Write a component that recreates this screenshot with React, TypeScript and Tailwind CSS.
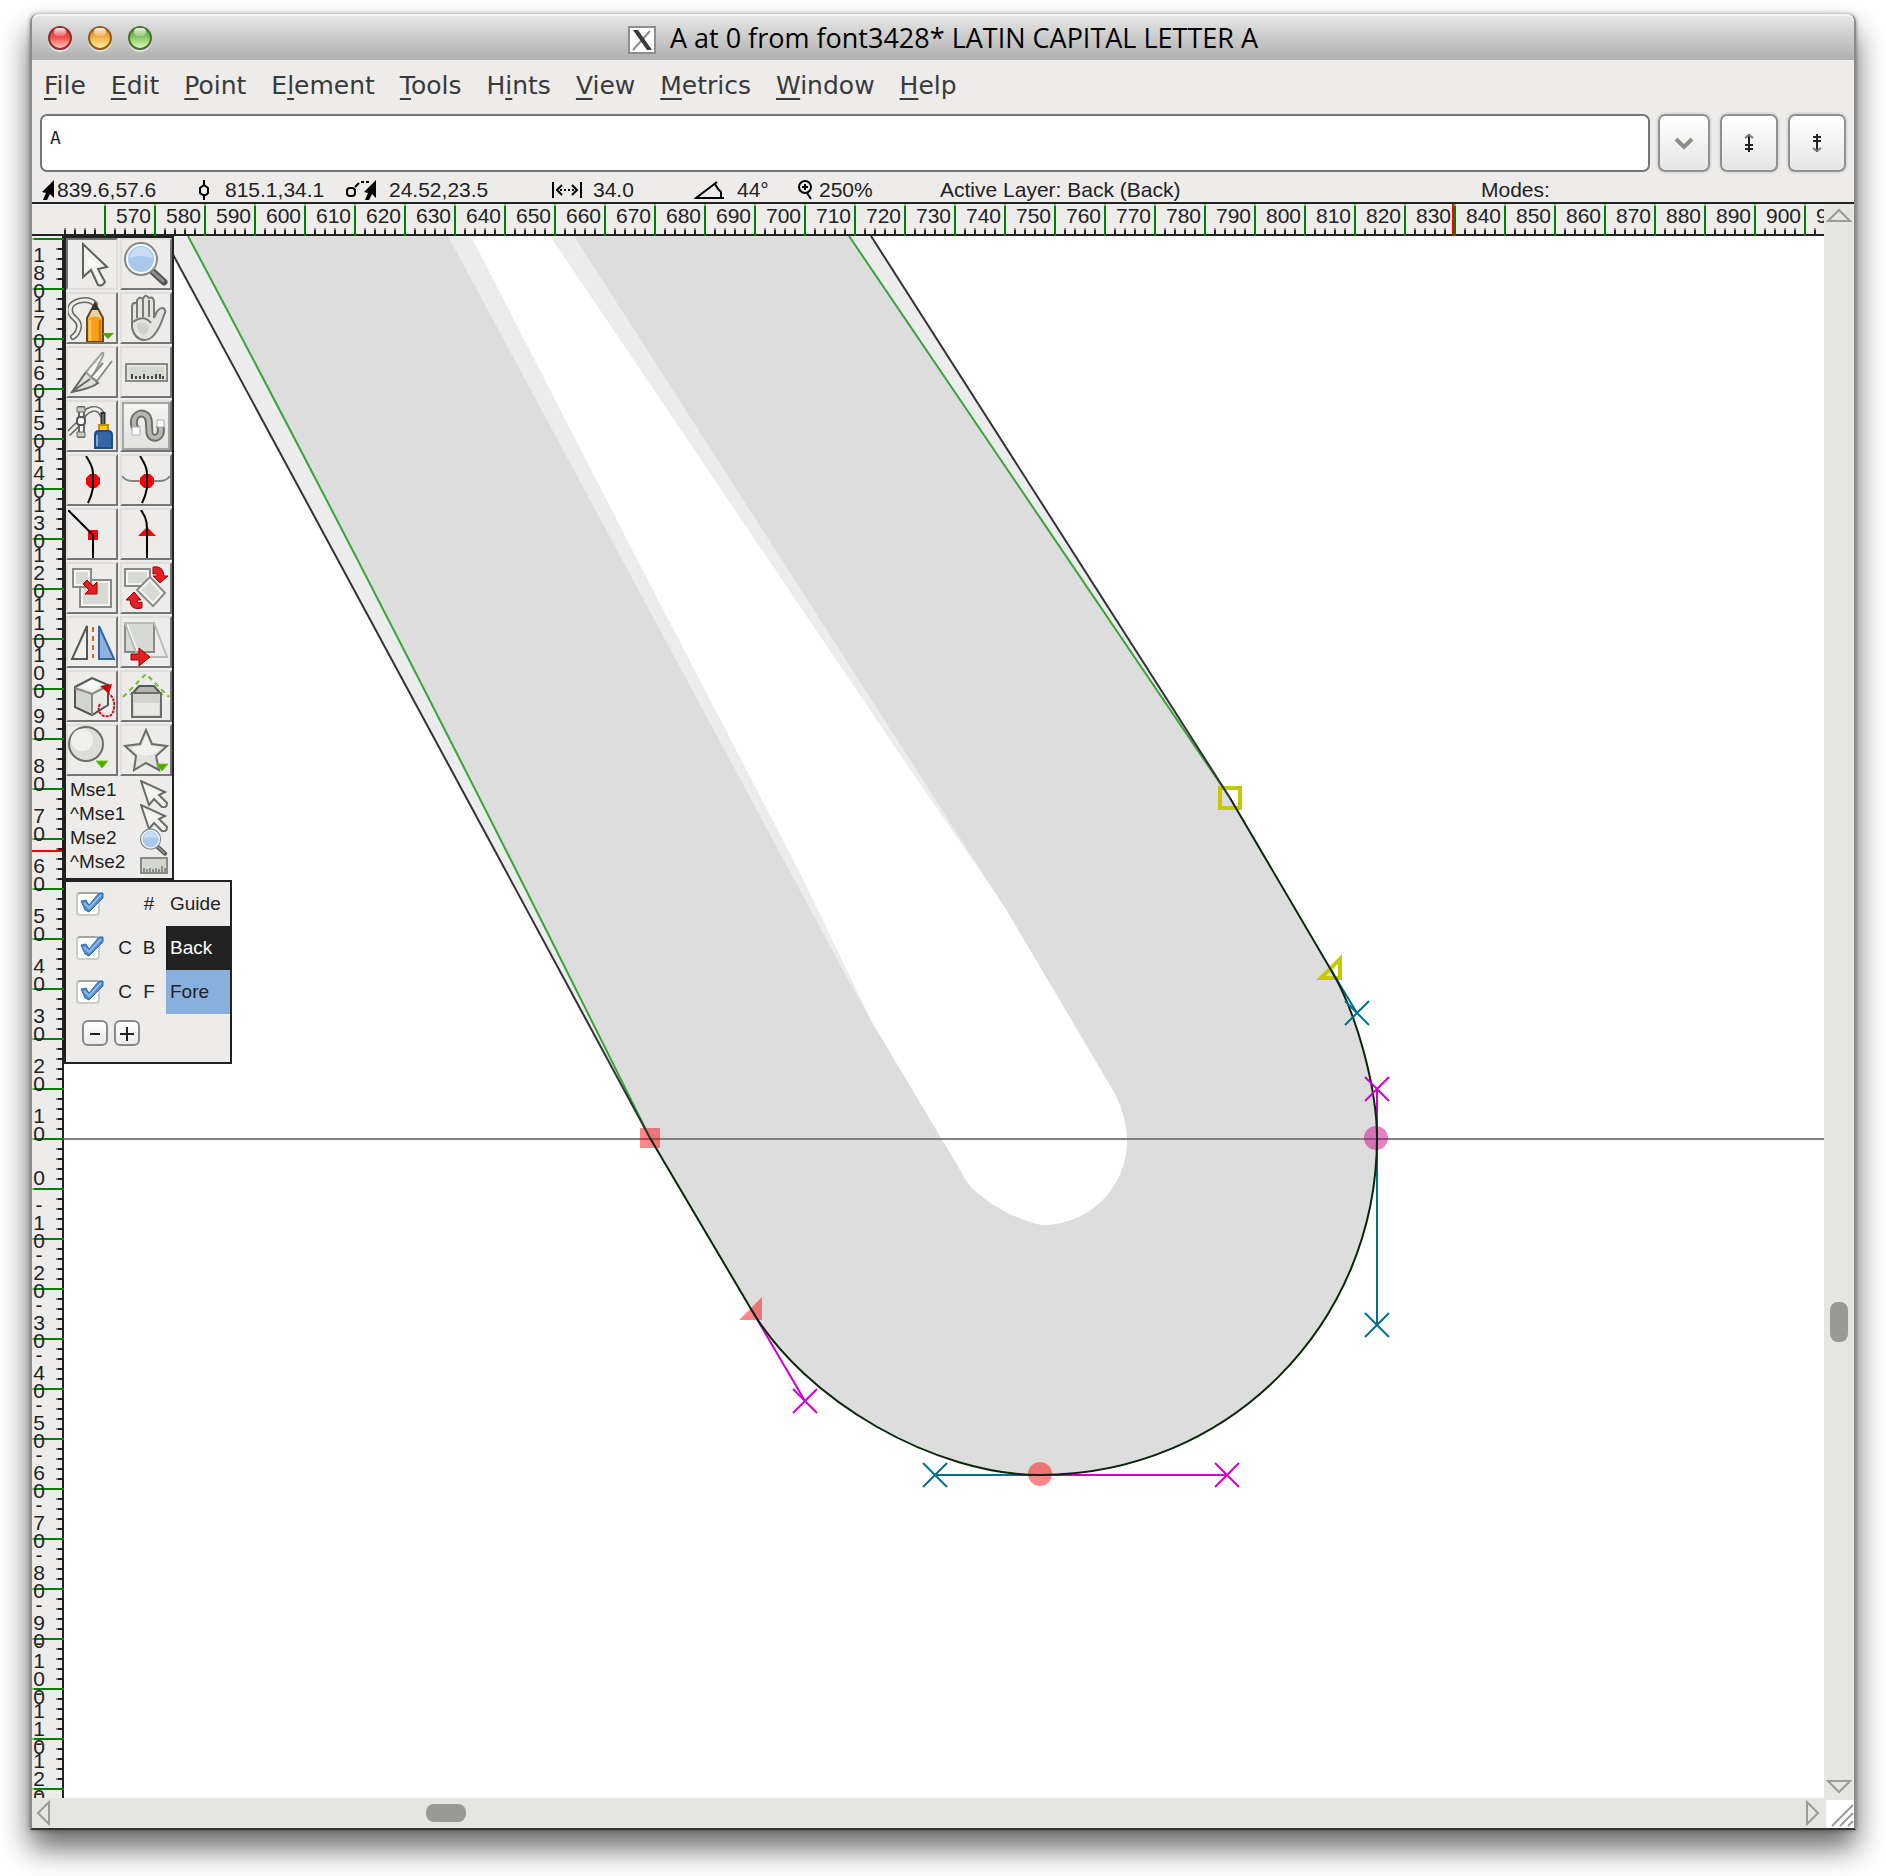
import React from "react";

const menus: [string, number][] = [
  ["File", 0],
  ["Edit", 0],
  ["Point", 0],
  ["Element", 1],
  ["Tools", 0],
  ["Hints", 1],
  ["View", 0],
  ["Metrics", 0],
  ["Window", 0],
  ["Help", 0],
];

const rulerX = Array.from({ length: 35 }, (_, i) => 570 + i * 10);
const rulerY = Array.from({ length: 32 }, (_, i) => 180 - i * 10);

const labelTop: Record<number, string> = {
  1: "mt-[31px]",
  2: "mt-[19px]",
  3: "mt-2",
  4: "-mt-1",
};

function MacButton({ label, tone }: { label: string; tone: string }) {
  return (
    <button
      aria-label={label}
      className={`relative h-6 w-6 rounded-full border-2 shadow-[0_2px_1px_rgba(255,255,255,0.6)] ${tone}`}
    >
      <span className="absolute left-1 right-1 top-0 h-2 rounded-full bg-linear-to-b from-white/90 to-white/20" />
    </button>
  );
}

function TitleBar() {
  return (
    <header className="relative flex h-[46px] shrink-0 items-center justify-center rounded-t-lg border-t-2 border-[#f4f4f4] bg-linear-to-b from-[#e6e6e6] to-[#b0b0b0]">
      <div className="absolute left-4 top-[10px] flex gap-4">
        <MacButton label="Close" tone="border-[#8f2f30] bg-linear-to-b from-[#c93438] via-[#f8504e] to-[#ffc4c0]" />
        <MacButton label="Minimize" tone="border-[#935c1e] bg-linear-to-b from-[#cf7f24] via-[#f6b347] to-[#fff19c]" />
        <MacButton label="Zoom" tone="border-[#4b7136] bg-linear-to-b from-[#569b39] via-[#8dcb69] to-[#dcf8b8]" />
      </div>
      <svg className="mr-3.5 mt-1 h-7 w-7" viewBox="0 0 28 28" aria-hidden="true">
        <rect x="1" y="1" width="26" height="26" fill="#fff" stroke="#8e8e8e" strokeWidth="2" />
        <path d="M22 5 5 24" stroke="#8c8c8c" strokeWidth="2" />
        <path d="M5 4h5l14 20h-5z" fill="#3a3a3a" />
      </svg>
      <h1 className="whitespace-nowrap font-['Open_Sans','Noto_Sans',sans-serif] text-[27px] leading-8 text-black">
        A at 0 from font3428* LATIN CAPITAL LETTER A
      </h1>
    </header>
  );
}

function MenuBar() {
  return (
    <nav className="flex h-[52px] shrink-0 items-center gap-[25px] pl-3 font-['DejaVu_Sans',sans-serif] text-[25px] text-[#3a3a3a]">
      {menus.map(([name, at]) => (
        <button key={name} className="leading-8">
          {name.slice(0, at)}
          <span className="underline decoration-2 underline-offset-4">{name[at]}</span>
          {name.slice(at + 1)}
        </button>
      ))}
    </nav>
  );
}

const toolButton =
  "flex h-[58px] items-center justify-center rounded-[7px] border-2 border-[#8f8f8f] bg-linear-to-b from-white to-[#e6e6e6] shadow-[0_0_0_2px_#e0dfdd]";

function WordBar() {
  return (
    <div className="flex h-[62px] shrink-0 items-center gap-2 px-2">
      <input
        aria-label="Word list"
        defaultValue="A"
        className="h-[58px] min-w-0 flex-1 rounded-[7px] border-2 border-[#757575] bg-white pb-3 pl-2 font-['DejaVu_Sans_Mono',monospace] text-lg text-[#222] outline-none"
      />
      <button aria-label="Show word list" className={`w-[52px] ${toolButton}`}>
        <svg className="h-4 w-5" viewBox="0 0 20 16" fill="none" aria-hidden="true">
          <path d="M2 4l8 8 8-8" stroke="#8c8e88" strokeWidth="4" />
        </svg>
      </button>
      <button aria-label="Previous in word list" className={`ml-0.5 w-[58px] ${toolButton}`}>
        <svg className="h-5 w-3" viewBox="0 0 12 20" fill="none" stroke="#222" strokeWidth="2" aria-hidden="true">
          <path d="M6 1v18M2 12h8M2 16h8" />
          <path d="M2 5 6 2l4 3" stroke="#777" />
        </svg>
      </button>
      <button aria-label="Next in word list" className={`ml-0.5 w-[58px] ${toolButton}`}>
        <svg className="h-5 w-3" viewBox="0 0 12 20" fill="none" stroke="#222" strokeWidth="2" aria-hidden="true">
          <path d="M6 1v18M2 4h8M2 8h8" />
          <path d="M2 15l4 3 4-3" stroke="#777" />
        </svg>
      </button>
    </div>
  );
}

function Field({ width, slot, icon, children }: { width: string; slot: string; icon?: React.ReactNode; children: string }) {
  return (
    <div className={`flex shrink-0 items-center ${width}`}>
      {icon && <span className={`h-5 shrink-0 ${slot}`}>{icon}</span>}
      <span>{children}</span>
    </div>
  );
}

const arrowPath = "M12 0V18L8 14 5 20H1L4 13 0 12Z";

function StatusBar() {
  return (
    <div className="flex h-7 shrink-0 items-center overflow-hidden whitespace-nowrap pl-2.5 pt-1 font-['Liberation_Sans',Arial,sans-serif] text-[21px] leading-5 text-[#222]">
      <Field
        width="w-[156px]"
        slot="w-[15px]"
        icon={
          <svg width="12" height="20" viewBox="0 0 12 20" aria-hidden="true">
            <path d={arrowPath} fill="#000" />
          </svg>
        }
      >
        839.6,57.6
      </Field>
      <Field
        width="w-[148px]"
        slot="w-[27px]"
        icon={
          <svg width="12" height="20" viewBox="0 0 12 20" fill="none" stroke="#000" strokeWidth="2" aria-hidden="true">
            <path d="M6 0v6M6 15v5M6 5 2 8v5l3 2h3l2-2V8Z" />
          </svg>
        }
      >
        815.1,34.1
      </Field>
      <Field
        width="w-[206px]"
        slot="w-[43px]"
        icon={
          <svg width="31" height="20" viewBox="0 0 31 20" aria-hidden="true">
            <rect x="1" y="8" width="8" height="8" rx="3" fill="none" stroke="#000" strokeWidth="2" />
            <path d="M9 7l4-4M15 2h3M20 2h3" stroke="#000" strokeWidth="2" />
            <path d={arrowPath} transform="translate(18 0)" fill="#000" />
          </svg>
        }
      >
        24.52,23.5
      </Field>
      <Field
        width="w-[142px]"
        slot="w-[41px]"
        icon={
          <svg width="30" height="20" viewBox="0 0 30 20" fill="none" stroke="#000" strokeWidth="2" aria-hidden="true">
            <path d="M1 2v16M29 2v16M10 5l-5 5 5 5M20 5l5 5-5 5" />
            <path d="M8 10h14" strokeDasharray="2 2" />
          </svg>
        }
      >
        34.0
      </Field>
      <Field
        width="w-[103px]"
        slot="w-[43px]"
        icon={
          <svg width="30" height="20" viewBox="0 0 30 20" fill="none" stroke="#000" strokeWidth="2" aria-hidden="true">
            <path d="M23 2 2 18h28M21 4l3 5 3 3v6" />
          </svg>
        }
      >
        44°
      </Field>
      <Field
        width="w-[143px]"
        slot="w-[22px]"
        icon={
          <svg width="18" height="20" viewBox="0 0 18 20" fill="none" stroke="#000" strokeWidth="2" aria-hidden="true">
            <circle cx="8" cy="7" r="6" />
            <path d="M8 4v6M5 7h6M10 13l4 6" />
          </svg>
        }
      >
        250%
      </Field>
      <Field width="w-[541px]" slot="">
        Active Layer: Back (Back)
      </Field>
      <Field width="w-auto" slot="">
        Modes:
      </Field>
    </div>
  );
}

function TickRow() {
  return (
    <div className="flex h-1.5 w-10 justify-between pr-2">
      {[0, 1, 2, 3].map((n) => (
        <span key={n} className="h-full w-0.5 bg-[linear-gradient(#858585_2px,#222_2px)]" />
      ))}
    </div>
  );
}

function HorizontalRuler() {
  return (
    <div className="relative flex h-8 overflow-hidden bg-[linear-gradient(#edecea_30px,#222_30px)]">
      <div className="flex h-[30px] w-[72px] shrink-0 items-end pl-8">
        <TickRow />
      </div>
      {rulerX.map((v) => (
        <div key={v} className="relative flex h-8 w-[50px] shrink-0">
          <span className="h-full w-0.5 bg-[linear-gradient(#80bf80_2px,#008000_2px)]" />
          <div className="relative h-[30px] w-12">
            <span className="block pl-2.5 pt-0.5 text-[21px] leading-5">{v}</span>
            <div className="absolute bottom-0 left-2">
              <TickRow />
            </div>
          </div>
        </div>
      ))}
      <span className="absolute left-[1420px] top-0 h-8 w-0.5 bg-[#f00]" />
    </div>
  );
}

function VerticalRuler() {
  return (
    <div className="relative w-8 shrink-0 overflow-hidden bg-[linear-gradient(to_right,#edecea_30px,#222_30px)]">
      <div className="absolute inset-0 pt-0.5">
        {rulerY.map((v) => (
          <div key={v} className="relative flex h-[50px] items-start">
            <span className="absolute left-0 top-0 h-0.5 w-full bg-[linear-gradient(to_right,#80bf80_2px,#008000_2px)]" />
            <div className="absolute right-0.5 top-[10px] flex flex-col gap-2">
              {[0, 1, 2, 3].map((n) => (
                <span key={n} className="h-0.5 w-1.5 bg-[linear-gradient(to_right,#858585_2px,#222_2px)]" />
              ))}
            </div>
            <div className={`relative z-10 flex w-[14px] flex-col items-center ${labelTop[String(v).length]}`}>
              {String(v)
                .split("")
                .map((c, i) => (
                  <span key={i} className="text-[21px] leading-[18px]">
                    {c}
                  </span>
                ))}
            </div>
          </div>
        ))}
      </div>
      <span className="absolute left-0 top-[614px] h-0.5 w-[30px] bg-[#f00]" />
    </div>
  );
}

function Cross({ x, y, color }: { x: number; y: number; color: string }) {
  return <path d={`M${x - 12} ${y - 12}l24 24M${x + 12} ${y - 12}l-24 24`} stroke={color} strokeWidth="2" />;
}

const strokeTail = "L751 1309C805 1401 935 1475 1040 1475C1227 1475 1377 1325 1377 1138C1377 1089 1357 1013 1331 970L1230 798";
const innerBowl = "L962 1173Q966 1182 972 1188C992 1207 1018 1220 1042 1225C1090 1225 1127 1187 1127 1140Q1126 1115 1115 1094L1007 911";

function GlyphDrawing() {
  const blue = "#007090";
  const pink = "#d000d0";
  return (
    <svg
      className="absolute inset-0 h-full w-full"
      viewBox="64 236 1760 1562"
      preserveAspectRatio="xMinYMin slice"
      fill="none"
      role="img"
      aria-label="Outline of the letter A"
    >
      <path d={`M163 236 650 1138${strokeTail}L871 236Z`} fill="#ececec" />
      <path d={`M188 236Q411 656 650 1138${strokeTail}L849 236Z`} fill="#ddd" />
      <path d={`M448 236 852 987 872 1022${innerBowl}L574 236Z`} fill="#ececec" />
      <path d={`M471 236 640 565 800 873 872 1022${innerBowl}L991 887 901 756 550 236Z`} fill="#fff" />
      <path d="M64 1139H1824" stroke="#808080" strokeWidth="2" />

      <rect x="640" y="1128" width="20" height="20" fill="#f00" fillOpacity=".47" />
      <path d="M739 1320 762 1297V1320Z" fill="#f00" fillOpacity=".47" />
      <circle cx="1040" cy="1474" r="12" fill="#f00" fillOpacity=".47" />
      <circle cx="1376" cy="1138" r="12" fill="#c40084" fillOpacity=".48" />
      <rect x="1220" y="788" width="20" height="20" stroke="#c8c800" strokeWidth="4" />
      <path d="M1321 978 1340 959V978Z" stroke="#c8c800" strokeWidth="4" />

      <path d="M935 1475H1040M1377 1138V1325M1331 970 1357 1013" stroke={blue} strokeWidth="2" />
      <path d="M1040 1475H1227M1377 1138V1089M751 1309 805 1401" stroke={pink} strokeWidth="2" />

      <path d="M188 236Q411 656 650 1138" stroke="#3aa33a" strokeWidth="2" />
      <path d="M849 236 1230 798" stroke="#3aa33a" strokeWidth="2" />
      <path d="M163 236 650 1138M1230 798 871 236" stroke="#333" strokeWidth="2" />
      <path d={`M650 1138${strokeTail}`} stroke="#0c240c" strokeWidth="2" />

      <Cross x={935} y={1475} color={blue} />
      <Cross x={1377} y={1325} color={blue} />
      <Cross x={1357} y={1013} color={blue} />
      <Cross x={1227} y={1475} color={pink} />
      <Cross x={1377} y={1089} color={pink} />
      <Cross x={805} y={1401} color={pink} />
    </svg>
  );
}

const g = "#555753";

const PointerIcon = (
  <>
    <path d="M17 6V39L25 32 32 47Q36 49 39 44L32 31 41 29Z" fill="#f2f2f1" stroke="#5f615d" strokeWidth="2" />
    <path d="M22 20v12l5-5 6 0z" fill="#fff" />
  </>
);
const MagnifierIcon = (
  <>
    <path d="M31 32 44 44" stroke="#555" strokeWidth="7" strokeLinecap="round" />
    <path d="M33 34 43 43" stroke="#8f918c" strokeWidth="3" strokeLinecap="round" />
    <circle cx="21" cy="21" r="16" fill="#a9c8ec" stroke="#858783" strokeWidth="2" />
    <circle cx="21" cy="21" r="14" stroke="#f3f6fa" strokeWidth="2" />
    <path d="M10 20a11 11 0 0 1 22 0q-11-4-22 0z" fill="#c8dcf3" />
  </>
);
const RulerIcon = (
  <>
    <rect x="6" y="18" width="41" height="17" fill="#d3d7cf" stroke="#888a85" strokeWidth="2" />
    <rect x="8" y="20" width="37" height="13" stroke="#f4f4f2" strokeWidth="1" />
    <path d="M12 33v-5M16 33v-3M20 33v-3M24 33v-5M28 33v-3M32 33v-3M36 33v-5M40 33v-5M43 33v-3" stroke="#444" strokeWidth="2" />
  </>
);
const SmallPointerIcon = (
  <path d="M1 1 9 25 14 19 22 27Q27 28 27 23L19 15 25 12Z" fill="#f2f2f1" stroke="#6b6d68" strokeWidth="2" />
);
const SmallRulerIcon = (
  <>
    <rect x="1" y="6" width="26" height="15" fill="#d3d7cf" stroke="#888a85" strokeWidth="2" />
    <path d="M4 20v-4M7 20v-3M10 20v-4M13 20v-3M16 20v-4M19 20v-3M22 20v-6M25 20v-4" stroke="#444" strokeWidth="1" />
  </>
);

const tools: { name: string; art: React.ReactNode; raised?: boolean }[] = [
  { name: "Pointer", art: PointerIcon },
  { name: "Magnify", art: MagnifierIcon },
  {
    name: "Draw freehand",
    art: (
      <>
        <path d="M29 12C22 5 4 8 4 18 4 27 14 26 13 35 12 41 10 43 7 45" stroke="#666863" strokeWidth="6" strokeLinecap="round" />
        <path d="M29 12C22 5 4 8 4 18 4 27 14 26 13 35 12 41 10 43 7 45" stroke="#ededeb" strokeWidth="3" strokeLinecap="round" />
        <path d="M21 50V26L29 11 37 26V50Z" fill="#f8a014" stroke="#6b4a12" strokeWidth="2" />
        <path d="M22 27 29 13 36 27Q29 22 22 27Z" fill="#eccfa6" />
        <path d="M25 18 29 10 33 18Z" fill="#333" />
        <path d="M24 28V49" stroke="#fcc15a" strokeWidth="3" />
        <path d="M34 28V49" stroke="#d87c00" strokeWidth="3" />
        <path d="M36 41H48L42 47Z" fill="#4fa60c" />
      </>
    ),
  },
  {
    name: "Scroll by hand",
    art: (
      <>
        <path
          d="M12 33V14Q13 9 17 12V8Q20 4 23 7 25 1 29 6 34 4 34 11V26Q38 15 43 16 47 18 44 23 40 36 34 43 30 48 24 48 14 47 12 35Z"
          fill="#e3e4e1"
          stroke="#777974"
          strokeWidth="2"
        />
        <path d="M17 12V26M23 8V25M29 8V25M13 30Q24 22 31 31" stroke="#777974" strokeWidth="2" />
        <path d="M17 32Q24 28 29 35 28 43 23 43 17 40 17 32Z" fill="#cfd2cc" />
      </>
    ),
  },
  {
    name: "Cut splines",
    art: (
      <>
        <path d="M6 46 20 26 32 37Q26 42 6 46Z" fill="#dfe1dd" stroke="#666863" strokeWidth="2" />
        <path d="M20 26 36 7Q38 6 37 10L26 32Z" fill="#f6f6f5" stroke="#a0a29e" strokeWidth="2" />
        <path d="M46 15 31 35 25 31 37 17" fill="#f6f6f5" stroke="#888a85" strokeWidth="2" />
        <path d="M7 45 24 33" stroke="#666863" strokeWidth="2" />
      </>
    ),
  },
  { name: "Measure", art: RulerIcon },
  {
    name: "Pen",
    art: (
      <>
        <path d="M2 34 14 22C19 8 32 4 37 16" stroke="#666863" strokeWidth="6" />
        <path d="M2 34 14 22C19 8 32 4 37 16" stroke="#efefed" strokeWidth="3" />
        <path d="M13 7h5v30h-5z" fill="#f3f3f2" stroke="#666863" strokeWidth="2" />
        <path d="M11 7h8v5h-8zM11 32h8v5h-8z" fill="#c9cbc6" stroke="#666863" strokeWidth="1" />
        <rect x="11" y="17" width="8" height="8" rx="3" fill="#fff" stroke="#555" strokeWidth="2" />
        <path d="M37 12V25" stroke="#2e3436" strokeWidth="5" />
        <path d="M37 14V24" stroke="#9b9d99" strokeWidth="1" />
        <rect x="33" y="25" width="9" height="6" fill="#f5d10a" stroke="#b89200" strokeWidth="2" />
        <path d="M29 48V35Q29 31 33 31H42Q46 31 46 35V48Z" fill="#3465a4" stroke="#204a87" strokeWidth="2" />
        <path d="M31 46V35" stroke="#86a8d6" strokeWidth="2" />
      </>
    ),
  },
  {
    name: "Spiro",
    raised: true,
    art: (
      <>
        <path d="M16 30C10 18 18 12 24 14 33 17 26 34 32 37 38 40 43 34 40 25" stroke="#6d6f6a" strokeWidth="8" />
        <path d="M16 30C10 18 18 12 24 14 33 17 26 34 32 37 38 40 43 34 40 25" stroke="#b5b8b2" strokeWidth="4" />
        <rect x="12" y="27" width="8" height="8" fill="#fff" stroke="#aaa" strokeWidth="1" />
        <rect x="37" y="20" width="7" height="7" fill="#fff" stroke="#aaa" strokeWidth="1" />
      </>
    ),
  },
  {
    name: "Add curve point",
    art: (
      <>
        <path d="M24 20h6l4 4v6l-4 4h-6l-4-4v-6z" fill="#f00" />
        <path d="M20 2 23 7Q27 14 27 20V34L25 42 22 49" stroke="#000" strokeWidth="2" />
      </>
    ),
  },
  {
    name: "Add HV curve point",
    art: (
      <>
        <path d="M2 22Q6 27 12 27H40Q46 27 50 22" stroke="#858585" strokeWidth="2" />
        <path d="M24 20h6l4 4v6l-4 4h-6l-4-4v-6z" fill="#f00" />
        <path d="M20 2 23 7Q27 14 27 20V34L25 42 22 49" stroke="#000" strokeWidth="2" />
      </>
    ),
  },
  {
    name: "Add corner point",
    art: (
      <>
        <rect x="22" y="22" width="10" height="10" fill="#f00" />
        <path d="M2 2 27 27V50" stroke="#000" strokeWidth="2" />
      </>
    ),
  },
  {
    name: "Add tangent point",
    art: (
      <>
        <path d="M27 19 36 28H18Z" fill="#f00" />
        <path d="M21 2 25 9Q27 14 27 20V50" stroke="#000" strokeWidth="2" />
      </>
    ),
  },
  {
    name: "Scale",
    art: (
      <>
        <rect x="14" y="18" width="31" height="27" fill="#d7dad3" stroke="#888a85" strokeWidth="2" />
        <rect x="16" y="20" width="27" height="23" stroke="#f4f4f2" strokeWidth="2" />
        <rect x="7" y="7" width="18" height="18" fill="#d7dad3" stroke="#888a85" strokeWidth="2" />
        <rect x="9" y="9" width="14" height="14" stroke="#f4f4f2" strokeWidth="2" />
        <path d="M17 22 21 18 27 24 31 20V32H19L23 28Z" fill="#e02024" stroke="#a40000" strokeWidth="1" />
      </>
    ),
  },
  {
    name: "Rotate",
    art: (
      <>
        <rect x="5" y="7" width="25" height="17" fill="#d7dad3" stroke="#888a85" strokeWidth="2" />
        <rect x="7" y="9" width="21" height="13" stroke="#f4f4f2" strokeWidth="2" />
        <path d="M30 15 45 31 33 44 17 28Z" fill="#d7dad3" stroke="#888a85" strokeWidth="2" />
        <path d="M30 18 42 31 33 41 20 28Z" stroke="#f4f4f2" strokeWidth="2" />
        <path d="M33 5Q43 3 44 14H48L40 21 33 14H37Q38 11 33 12Z" fill="#e02024" stroke="#a40000" strokeWidth="1" />
        <path d="M22 46Q10 49 10 38H6L14 30 21 38H17Q17 42 22 40Z" fill="#e02024" stroke="#a40000" strokeWidth="1" />
      </>
    ),
  },
  {
    name: "Flip",
    art: (
      <>
        <path d="M21 10V43H6Z" fill="#f0f0ee" stroke={g} strokeWidth="2" />
        <path d="M27 11V42" stroke="#d9660a" strokeWidth="2" strokeDasharray="5 4" />
        <path d="M33 10V43H48Z" fill="#8fb3de" stroke="#3465a4" strokeWidth="2" />
      </>
    ),
  },
  {
    name: "Skew",
    art: (
      <>
        <rect x="5" y="7" width="29" height="29" fill="#d7dad3" stroke="#888a85" strokeWidth="2" />
        <path d="M7 9 17 35" stroke="#fff" strokeWidth="2" />
        <path d="M5 7H34L47 41H18Z" stroke="#b9bbb6" strokeWidth="2" />
        <path d="M11 38H19V32L30 41 19 50V44H11Z" fill="#e02024" stroke="#a40000" strokeWidth="1" />
      </>
    ),
  },
  {
    name: "Rotate in 3D",
    art: (
      <>
        <path d="M9 17 26 8 42 15V35L26 45 9 37Z" fill="#e9e9e7" stroke={g} strokeWidth="2" />
        <path d="M10 19 26 25V43L10 36Z" fill="#d2d4d0" />
        <path d="M9 18 26 24 42 16M26 24V45" stroke="#888a85" strokeWidth="2" />
        <path d="M26 10 38 15 26 20 14 17Z" fill="#f8f8f8" />
        <path d="M34 34Q30 42 38 46 47 48 48 38 49 28 43 24" stroke="#c81418" strokeWidth="2" strokeDasharray="3 1" />
        <path d="M34 16 46 14 43 24Z" fill="#cc0000" />
      </>
    ),
  },
  {
    name: "Perspective",
    art: (
      <>
        <path d="M3 27 26 4 49 27" stroke="#73c02c" strokeWidth="2" strokeDasharray="5 4" />
        <path d="M12 24 19 16H34L41 24Z" fill="#b4b6b1" stroke={g} strokeWidth="2" />
        <rect x="12" y="23" width="29" height="24" fill="#d3d4d0" stroke="#6b6d68" strokeWidth="2" />
        <rect x="14" y="33" width="25" height="12" fill="#e8e8e6" />
      </>
    ),
  },
  {
    name: "Ellipse",
    art: (
      <>
        <circle cx="20" cy="20" r="17" fill="#dddedb" stroke="#6b6d68" strokeWidth="2" />
        <circle cx="16" cy="16" r="11" fill="#f0f0ef" />
        <path d="M30 37H42L36 44Z" fill="#4fa60c" stroke="#73d216" strokeWidth="1" />
      </>
    ),
  },
  {
    name: "Star",
    art: (
      <>
        <path d="M26 6 32 20 47 22 36 32 39 46 26 39 14 46 16 32 5 22 20 20Z" fill="#e2e3e0" stroke="#6b6d68" strokeWidth="2" />
        <path d="M26 11 31 22 41 24 34 30 26 32 18 30 11 24 22 22Z" fill="#f1f1f0" />
        <path d="M36 40H48L42 47Z" fill="#4fa60c" stroke="#73d216" strokeWidth="1" />
      </>
    ),
  },
];

const mouseBindings: { label: string; art: React.ReactNode; box: string }[] = [
  { label: "Mse1", art: SmallPointerIcon, box: "0 0 28 28" },
  { label: "^Mse1", art: SmallPointerIcon, box: "0 0 28 28" },
  { label: "Mse2", art: MagnifierIcon, box: "4 3 45 45" },
  { label: "^Mse2", art: SmallRulerIcon, box: "0 0 28 28" },
];

function ToolPalette() {
  return (
    <section aria-label="Tools" className="absolute left-0 top-0 w-[110px] border-2 border-[#222] bg-[#edecea] pb-1">
      <div className="grid grid-cols-2 gap-0.5 pb-0.5">
        {tools.map((tool, i) => (
          <button
            key={tool.name}
            aria-label={tool.name}
            className={
              i === 0
                ? "h-[52px] border-2 border-b-[#dfdedc] border-l-[#757575] border-r-[#dfdedc] border-t-[#757575]"
                : "h-[52px] border-2 border-b-[#757575] border-l-[#dfdedc] border-r-[#757575] border-t-[#dfdedc]"
            }
          >
            <span className={tool.raised ? "block h-full border-2 border-[#a5a5a3] bg-linear-to-b from-[#f4f4f3] to-[#e2e2e0]" : "block h-full"}>
              <svg
                className={tool.raised ? "h-11 w-11" : "h-12 w-12"}
                viewBox={tool.raised ? "4 4 44 44" : "2 2 48 48"}
                fill="none"
                aria-hidden="true"
              >
                {tool.art}
              </svg>
            </span>
          </button>
        ))}
      </div>
      <ul>
        {mouseBindings.map((b) => (
          <li key={b.label} className="flex h-6 items-center justify-between pl-1 pr-1 text-[19px] leading-6">
            <span>{b.label}</span>
            <svg className="mt-2 h-7 w-7 shrink-0" viewBox={b.box} fill="none" aria-hidden="true">
              {b.art}
            </svg>
          </li>
        ))}
      </ul>
    </section>
  );
}

const layers = [
  { name: "Guide", curve: "", kind: "#", tone: "" },
  { name: "Back", curve: "C", kind: "B", tone: "bg-[#222] text-white" },
  { name: "Fore", curve: "C", kind: "F", tone: "bg-[#87b0dd]" },
];

const smallButton =
  "flex h-[26px] w-[26px] items-center justify-center rounded-md border-2 border-[#8a8a8a] bg-linear-to-b from-white to-[#ececec]";

function LayerPalette() {
  return (
    <section
      aria-label="Layers"
      className="absolute left-0 top-[644px] h-[184px] w-[168px] border-2 border-[#222] bg-[#edecea] text-[19px]"
    >
      {layers.map((layer) => (
        <label key={layer.name} className="flex h-11 items-center pl-2.5">
          <span className="relative h-6 w-6">
            <input
              type="checkbox"
              defaultChecked
              className="peer block h-6 w-6 appearance-none rounded-sm border-2 border-[#cbcec4] border-t-[#a3a898] bg-white"
            />
            <svg className="absolute left-1 top-0 hidden h-6 w-6 peer-checked:block" viewBox="0 0 24 24" aria-hidden="true">
              <path d="M1 9 6 8 9 13 19 1 23 1 23 6 12 17 9 20 5 18Z" fill="#4f8bcb" stroke="#2f6cb0" strokeWidth="1" />
              <path d="M4 11 9 16 21 3" stroke="#8fb8e4" strokeWidth="2" fill="none" />
            </svg>
          </span>
          <span className="ml-[18px] w-[14px] text-center">{layer.curve}</span>
          <span className="ml-2.5 w-[14px] text-center">{layer.kind}</span>
          <span className={`ml-auto flex h-11 w-16 items-center pl-1 ${layer.tone}`}>{layer.name}</span>
        </label>
      ))}
      <div className="flex gap-1.5 pl-4 pt-1.5">
        <button aria-label="Remove layer" className={smallButton}>
          <svg className="h-4 w-4" viewBox="0 0 16 16" stroke="#222" strokeWidth="2" aria-hidden="true">
            <path d="M3 9H13" />
          </svg>
        </button>
        <button aria-label="Add layer" className={smallButton}>
          <svg className="h-4 w-4" viewBox="0 0 16 16" stroke="#222" strokeWidth="2" aria-hidden="true">
            <path d="M1 9H15M8 2V16" />
          </svg>
        </button>
      </div>
    </section>
  );
}

function ScrollArrow({ d, label, size, box }: { d: string; label: string; size: string; box: string }) {
  return (
    <button aria-label={label} className="shrink-0">
      <svg className={size} viewBox={box} fill="none" stroke="#9b9c98" strokeWidth="2" aria-hidden="true">
        <path d={d} />
      </svg>
    </button>
  );
}

function VerticalScrollbar() {
  return (
    <div className="flex w-[30px] shrink-0 flex-col items-center bg-[#e5e6e2] pt-1">
      <ScrollArrow label="Scroll up" size="block h-3.5 w-[26px]" box="0 0 26 14" d="M2 13 13 2 24 13Z" />
      <div className="flex w-full flex-1 flex-col items-center">
        <div className="grow-[1080]" />
        <div className="h-10 w-[18px] rounded-lg bg-[#999a96]" />
        <div className="grow-[438]" />
      </div>
      <ScrollArrow label="Scroll down" size="mb-1 block h-3.5 w-[26px]" box="0 0 26 14" d="M2 1H24L13 12Z" />
    </div>
  );
}

function HorizontalScrollbar() {
  return (
    <div className="flex h-[30px] shrink-0 bg-[#e5e6e2]">
      <div className="flex flex-1 items-center pl-1">
        <ScrollArrow label="Scroll left" size="block h-[26px] w-3.5" box="0 0 14 26" d="M13 2V24L2 13Z" />
        <div className="flex flex-1 items-center">
          <div className="grow-[376]" />
          <div className="h-[18px] w-10 rounded-lg bg-[#999a96]" />
          <div className="grow-[1340]" />
        </div>
        <ScrollArrow label="Scroll right" size="mr-1 block h-[26px] w-3.5" box="0 0 14 26" d="M1 2V24L12 13Z" />
      </div>
      <div className="flex w-[30px] items-end justify-end pl-0.5 pt-0.5">
        <svg className="h-7 w-7 bg-white" viewBox="0 0 28 28" stroke="#9b9c98" strokeWidth="2" aria-hidden="true">
          <path d="M6 26 27 5M14 26 27 13M22 26 27 21" />
        </svg>
      </div>
    </div>
  );
}

export default function App() {
  return (
    <main className="flex h-screen flex-col overflow-hidden bg-white px-[30px] pb-[46px] pt-3.5 text-[#222]">
      <div className="flex min-h-0 flex-1 flex-col rounded-t-lg shadow-[0_18px_30px_rgba(0,0,0,0.6),0_0_4px_rgba(0,0,0,0.4)]">
        <div className="flex min-h-0 flex-1 flex-col rounded-t-lg border-x-2 border-b-2 border-x-[#8c8c8c] border-b-[#333] bg-[#edecea]">
          <TitleBar />
          <MenuBar />
          <WordBar />
          <StatusBar />
          <div className="flex min-h-0 flex-1 border-t-2 border-[#222] font-['Liberation_Sans',Arial,sans-serif]">
            <div className="flex min-w-0 flex-1 flex-col">
              <HorizontalRuler />
              <div className="flex min-h-0 flex-1">
                <VerticalRuler />
                <div className="relative flex-1 overflow-hidden bg-white">
                  <GlyphDrawing />
                  <ToolPalette />
                  <LayerPalette />
                </div>
              </div>
            </div>
            <VerticalScrollbar />
          </div>
          <HorizontalScrollbar />
        </div>
      </div>
    </main>
  );
}
